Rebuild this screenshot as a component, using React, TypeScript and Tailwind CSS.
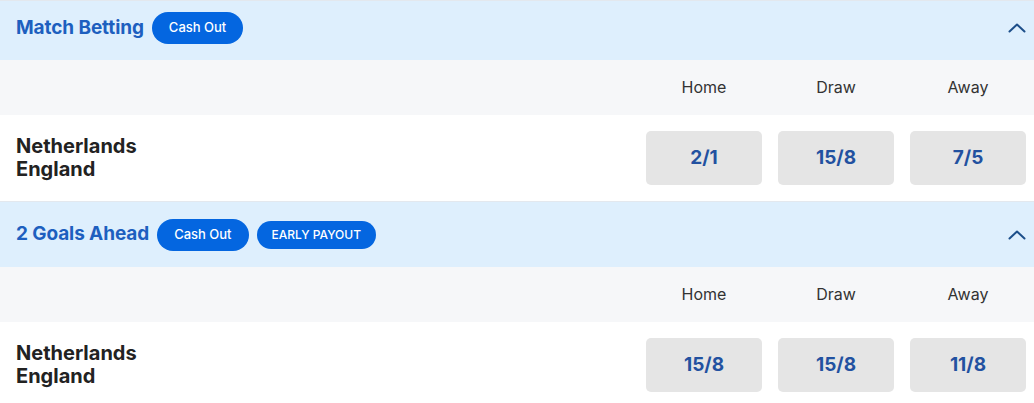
type Market = {
  title: string;
  badges: { label: string; small?: boolean }[];
  odds: string[];
  first?: boolean;
};

const markets: Market[] = [
  { title: "Match Betting", badges: [{ label: "Cash Out" }], odds: ["2/1", "15/8", "7/5"], first: true },
  {
    title: "2 Goals Ahead",
    badges: [{ label: "Cash Out" }, { label: "EARLY PAYOUT", small: true }],
    odds: ["15/8", "15/8", "11/8"],
  },
];

const columns = ["Home", "Draw", "Away"];

function Chevron() {
  return (
    <svg width="18" height="10" viewBox="0 0 18 10" fill="none">
      <polyline
        points="1.5,8.5 9,1.5 16.5,8.5"
        stroke="#1d4f8a"
        strokeWidth="2"
        strokeLinecap="round"
        strokeLinejoin="round"
      />
    </svg>
  );
}

function MarketBlock({ market }: { market: Market }) {
  return (
    <section>
      {/* Header */}
      <div
        className={
          market.first
            ? "flex h-[60px] items-center justify-between border-t border-[#e3e8ee] bg-[#deeffd] pb-[5px] pl-4 pr-[8px]"
            : "flex h-[66px] items-center justify-between border-t border-[#e3e8ee] bg-[#deeffd] pl-4 pr-[8px]"
        }
      >
        <div className="flex items-center gap-2">
          <h2 className="text-[19px] font-bold tracking-[-0.1px] text-[#1d5fbf]">{market.title}</h2>
          {market.badges.map((b) =>
            b.small ? (
              <span
                key={b.label}
                className="flex h-[28px] items-center rounded-full bg-[#0466e0] px-[15px] text-[12px] font-medium text-white"
              >
                {b.label}
              </span>
            ) : (
              <span
                key={b.label}
                className="flex h-[32px] items-center rounded-full bg-[#0466e0] px-[17px] text-[13px] font-medium text-white"
              >
                {b.label}
              </span>
            )
          )}
        </div>
        <Chevron />
      </div>

      {/* Column labels */}
      <div className="flex h-[55px] items-center justify-end gap-4 bg-[#f6f7f9] pb-px pr-[8px]">
        {columns.map((c) => (
          <div key={c} className="w-[116px] text-center text-[16px] text-[#333333]">
            {c}
          </div>
        ))}
      </div>

      {/* Selection row */}
      <div className="flex h-[86px] items-center justify-between bg-white pl-4 pr-[8px]">
        <div className="text-[20px] font-bold leading-[23px] text-[#222222]">
          <div>Netherlands</div>
          <div>England</div>
        </div>
        <div className="flex gap-4">
          {market.odds.map((o, i) => (
            <button
              key={i}
              className="flex h-[54px] w-[116px] items-center justify-center rounded-[5px] bg-[#e5e5e5] text-[19px] font-bold text-[#2251a0]"
            >
              {o}
            </button>
          ))}
        </div>
      </div>
    </section>
  );
}

export default function App() {
  return (
    <div className="h-[403px] w-[1034px] overflow-hidden bg-white" style={{ fontFamily: "Inter, 'Noto Sans', sans-serif" }}>
      {markets.map((m) => (
        <MarketBlock key={m.title} market={m} />
      ))}
    </div>
  );
}
